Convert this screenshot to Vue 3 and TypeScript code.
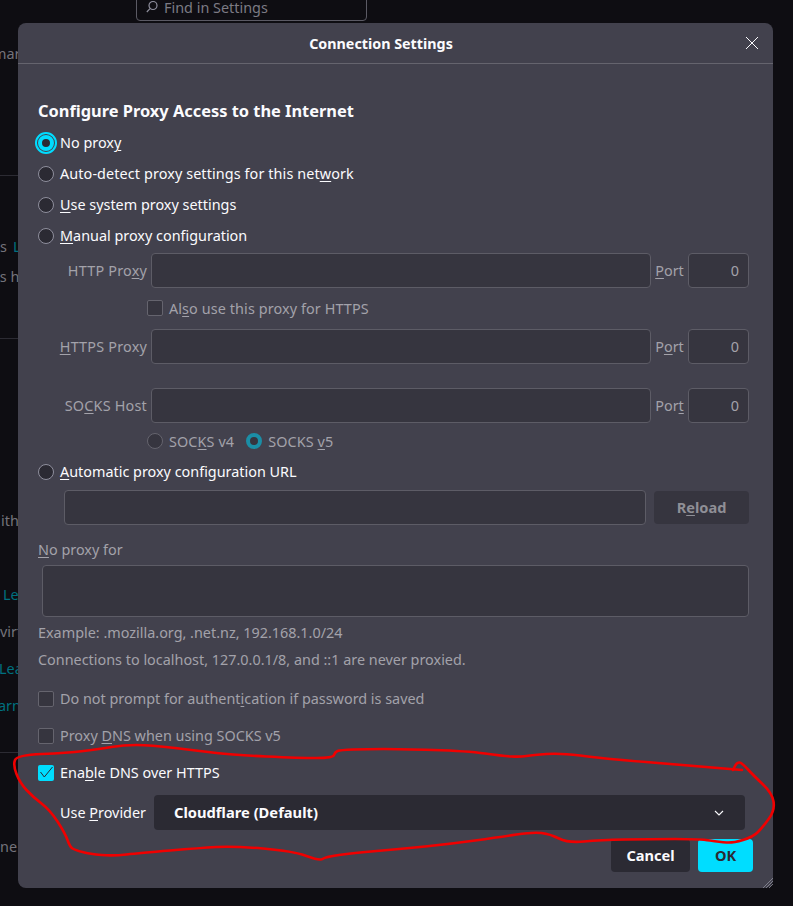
<script setup lang="ts">
const inkPoints: [number, number][] = [
  [742, 770], [683, 765], [633, 761], [600, 758], [560, 753], [533, 755], [520, 757], [503, 756], [467, 751],
  [400, 749], [367, 749], [340, 750], [335, 752], [333, 758], [300, 758], [233, 755], [200, 751], [150, 745],
  [123, 745], [100, 749], [67, 753], [17, 755], [13, 765], [20, 783], [33, 797], [50, 810], [65, 833], [70, 847],
  [75, 850], [90, 854], [113, 856], [140, 853], [200, 848], [233, 846], [293, 851], [320, 861], [325, 857],
  [353, 853], [400, 849], [450, 844], [500, 837], [533, 832], [550, 834], [568, 843], [600, 840], [650, 839],
  [700, 839], [720, 842], [733, 843], [753, 837], [763, 827], [775, 810], [772, 793], [753, 775], [742, 763],
  [737, 762], [733, 770],
]

function smooth(points: [number, number][]): string {
  let d = `M${points[0][0]} ${points[0][1]}`
  for (let i = 1; i < points.length - 1; i++) {
    const [x, y] = points[i]
    const [nx, ny] = points[i + 1]
    d += ` Q${x} ${y} ${(x + nx) / 2} ${(y + ny) / 2}`
  }
  const last = points[points.length - 1]
  return d + ` L${last[0]} ${last[1]}`
}
const annotation = smooth(inkPoints)

const fragments = [
  { text: 'mar', top: 45, left: -7, link: false },
  { text: 's', top: 238, left: 0, link: false },
  { text: 'L', top: 238, left: 13, link: true },
  { text: "'s h", top: 268, left: -3, link: false },
  { text: 'ith', top: 512, left: 1, link: false },
  { text: 'Le', top: 586, left: 3, link: true },
  { text: 'virt', top: 623, left: 0, link: false },
  { text: 'Lea', top: 660, left: -1, link: true },
  { text: 'arn', top: 697, left: -2, link: true },
  { text: 'ne', top: 838, left: 0, link: false },
]
const rules = [175, 338, 752]
</script>

<template>
  <div class="page">
    <div class="backdrop">
      <div class="search">
        <svg class="search-icon" width="12" height="14" viewBox="0 0 12 14" fill="none" stroke="#8f8f9d" stroke-width="1.2">
          <circle cx="7" cy="5.5" r="4" />
          <path d="M4 8.6 L0.8 12" />
        </svg>
        <span>Find in Settings</span>
      </div>
      <span
        v-for="f in fragments"
        :key="f.text + f.top"
        class="frag"
        :class="{ link: f.link }"
        :style="{ top: f.top + 'px', left: f.left + 'px' }"
      >{{ f.text }}</span>
      <i v-for="r in rules" :key="r" class="rule" :style="{ top: r + 'px' }"></i>
    </div>

    <section class="dialog">
      <header class="head">
        <h1>Connection Settings</h1>
        <svg class="close" width="14" height="14" viewBox="0 0 14 14" stroke="#fbfbfe" stroke-width="1" fill="none">
          <path d="M1 1 L13 13 M13 1 L1 13" />
        </svg>
      </header>

      <div class="body">
        <h2>Configure Proxy Access to the Internet</h2>

        <label class="opt first"><span class="radio on focus"></span><span>No prox<u>y</u></span></label>
        <label class="opt"><span class="radio"></span><span class="wide">Auto-detect proxy settings for this net<u>w</u>ork</span></label>
        <label class="opt"><span class="radio"></span><span><u>U</u>se system proxy settings</span></label>
        <label class="opt"><span class="radio"></span><span><u>M</u>anual proxy configuration</span></label>

        <div class="proxy-row r-http dim">
          <span class="plabel">HTTP Pro<u>x</u>y</span>
          <span class="field grow"></span>
          <span class="port"><u>P</u>ort</span>
          <span class="field num">0</span>
        </div>
        <label class="sub r-also dim"><span class="check"></span><span class="wide">Al<u>s</u>o use this proxy for HTTPS</span></label>
        <div class="proxy-row r-https dim">
          <span class="plabel"><u>H</u>TTPS Proxy</span>
          <span class="field grow"></span>
          <span class="port">P<u>o</u>rt</span>
          <span class="field num">0</span>
        </div>
        <div class="proxy-row r-socks dim">
          <span class="plabel">SO<u>C</u>KS Host</span>
          <span class="field grow"></span>
          <span class="port">Por<u>t</u></span>
          <span class="field num">0</span>
        </div>
        <div class="sub r-ver dim">
          <label class="ver"><span class="radio"></span><span class="wide">SOC<u>K</u>S v4</span></label>
          <label class="ver"><span class="radio on"></span><span class="wide">SOCKS <u>v</u>5</span></label>
        </div>

        <label class="opt r-auto"><span class="radio"></span><span><u>A</u>utomatic proxy configuration URL</span></label>
        <div class="auto-row">
          <span class="field grow"></span>
          <span class="reload"><span>R<u>e</u>load</span></span>
        </div>

        <div class="noproxy dim"><u>N</u>o proxy for</div>
        <div class="field area"></div>
        <p class="hint h1">Example: .mozilla.org, .net.nz, 192.168.1.0/24</p>
        <p class="hint h2">Connections to localhost, 127.0.0.1/8, and ::1 are never proxied.</p>

        <label class="opt r-prompt dim"><span class="check"></span><span>Do not prompt for authent<u>i</u>cation if password is saved</span></label>
        <label class="opt r-dns dim"><span class="check"></span><span>Proxy <u>D</u>NS when using SOCKS v5</span></label>
        <label class="opt r-doh">
          <span class="check on">
            <svg width="16" height="16" viewBox="0 0 16 16" fill="none" stroke="#2b2a33" stroke-width="1"><path d="M2.5 7 L6.3 12 L14.5 2" /></svg>
          </span><span>Ena<u>b</u>le DNS over HTTPS</span>
        </label>
        <div class="provider">
          <span class="plabel2">Use <u>P</u>rovider</span>
          <div class="select">
            <span>Cloudflare (Default)</span>
            <svg width="10" height="6" viewBox="0 0 10 6" fill="none" stroke="#fbfbfe" stroke-width="1.1"><path d="M1 1 L5 5 L9 1" /></svg>
          </div>
        </div>
      </div>

      <footer class="foot">
        <button class="btn cancel" type="button">Cancel</button>
        <button class="btn ok" type="button">OK</button>
      </footer>
      <svg class="grip" width="11" height="11" viewBox="0 0 11 11" stroke="#8f8f9d" stroke-width="0.8">
        <path d="M11 1 L1 11 M11 4 L4 11 M11 7 L7 11" />
      </svg>
    </section>

    <svg class="ink" width="793" height="906" viewBox="0 0 793 906" fill="none" stroke="#f00000" stroke-width="2.6" stroke-linejoin="round" stroke-linecap="round">
      <path :d="annotation" />
    </svg>
  </div>
</template>

<style>
html, body { margin: 0; background: #0e0d12; }
</style>

<style scoped>
.page {
  position: relative;
  width: 793px;
  height: 906px;
  overflow: hidden;
  background: #0e0d12;
  font-family: "Noto Sans", "Open Sans", sans-serif;
  font-size: 14.4px;
  color: #fbfbfe;
  box-sizing: border-box;
  padding: 23px 20px 18px 18px;
}
u { text-decoration-thickness: 1px; text-underline-offset: 2px; }
.wide { letter-spacing: 0.1px; }

.backdrop { position: absolute; inset: 0; }
.search {
  position: absolute; left: 136px; top: -12px; height: 33px;
  border: 1px solid #5b5a64; border-radius: 4px; color: #7c7b84;
  display: flex; align-items: center; gap: 6px; padding: 5px 9px 0; box-sizing: border-box;
  width: 231px;
}
.search-icon { flex: none; }
.frag { position: absolute; color: #74737b; font-size: 14.4px; line-height: 18px; }
.frag.link { color: #00707f; }
.rule { position: absolute; left: 0; width: 18px; height: 1px; background: #2c2b33; }

.dialog {
  position: relative;
  height: 865px;
  background: #42414d;
  border-radius: 8px;
  box-sizing: border-box;
  display: flex;
  flex-direction: column;
}
.head {
  position: relative;
  flex: none;
  height: 41px;
  border-bottom: 1px solid #65646e;
  display: flex;
  align-items: center;
  justify-content: center;
  padding-right: 29px;
  box-sizing: border-box;
}
h1 { margin: 0; padding-top: 1px; font-size: 14.3px; font-weight: 700; line-height: 38px; }
.close { position: absolute; right: 14px; top: 13px; }

.body { flex: 1; padding: 0 20px; display: flex; flex-direction: column; min-height: 0; }
h2 { margin: 36px 0 0; font-size: 16.4px; font-weight: 700; line-height: 22px; height: 22px; }

.opt { display: flex; align-items: center; gap: 6px; height: 20px; margin-top: 11px; line-height: 20px; white-space: pre; }
.radio {
  flex: none; width: 16px; height: 16px; box-sizing: border-box; border-radius: 50%;
  background: #2b2a33; border: 1px solid #8f8f9d; display: inline-block;
}
.radio.on { background: #2b2a33; border: 4px solid #00ddff; }
.radio.focus { outline: 2px solid #00ddff; outline-offset: 1px; }

.dim { color: #a3a2aa; }
.dim .radio, .dim .check { background: #36353f; border-color: #65646e; }
.dim .radio.on { background: #36353f; border-color: #1b8ea6; }

.field {
  display: block; box-sizing: border-box; background: #36353f; border: 1px solid #5d5c66; border-radius: 4px;
}
.grow { flex: 1; min-width: 0; }
.proxy-row { display: flex; align-items: center; height: 35px; }
.proxy-row .field { height: 35px; }
.plabel { flex: none; width: 109px; text-align: right; margin-right: 4px; letter-spacing: 0.2px; }
.port { flex: none; width: 29px; margin-left: 4px; margin-right: 4px; text-align: center; white-space: nowrap; }
.num {
  flex: none; width: 61px; text-align: right; padding-right: 9px; line-height: 33px; color: #a3a2aa;
}
.r-http { margin-top: 7px; margin-right: 4px; }
.r-https { margin-top: 11px; margin-right: 4px; }
.r-socks { margin-top: 24px; margin-right: 4px; }

.sub { display: flex; align-items: center; height: 20px; margin-left: 109px; white-space: pre; }
.sub .check { margin-right: 6px; }
.r-also { margin-top: 10px; }
.r-ver { margin-top: 8px; gap: 12px; }
.ver { display: flex; align-items: center; gap: 6px; }

.check {
  flex: none; display: inline-flex; width: 16px; height: 16px; box-sizing: border-box;
  border-radius: 2px; border: 1px solid #8f8f9d; background: #2b2a33;
}
.check.on { background: #00ddff; border: none; }

.r-auto { margin-top: 11px; }
.auto-row { display: flex; align-items: center; height: 35px; margin-top: 8px; margin-left: 26px; margin-right: 4px; gap: 8px; }
.auto-row .field { height: 35px; }
.reload {
  flex: none; width: 95px; height: 33px; border-radius: 4px; background: #36353f; color: #8f8f96;
  display: flex; align-items: center; justify-content: center; font-weight: 700; font-size: 14.6px; padding-bottom: 2px; box-sizing: border-box;
}
.noproxy { height: 20px; line-height: 20px; margin-top: 15px; }
.area { height: 52px; margin: 5px 4px 0 4px; }
.hint { margin: 0; height: 20px; line-height: 20px; color: #a3a2aa; }
.hint.h1 { margin-top: 6px; }
.hint.h2 { margin-top: 7px; }
.r-prompt { margin-top: 19px; }
.r-dns { margin-top: 17px; }
.r-doh { margin-top: 17px; }

.provider { display: flex; align-items: center; height: 35px; margin-top: 12px; margin-left: 22px; margin-right: 8px; }
.plabel2 { flex: none; width: 94px; }
.select {
  flex: 1; height: 35px; background: #2b2a33; border-radius: 4px; display: flex; align-items: center;
  justify-content: space-between; padding: 0 21px 2px 20px; font-weight: 700; font-size: 14.7px; box-sizing: border-box;
}
.select svg { margin-top: 2px; }

.foot { flex: none; display: flex; justify-content: flex-end; gap: 8px; padding: 0 20px 16px 0; }
.btn {
  height: 33px; border: none; border-radius: 4px; font: inherit; font-weight: 700; font-size: 14.6px; padding: 0 0 2px;
}
.cancel { width: 79px; background: #2b2a33; color: #fbfbfe; }
.ok { width: 55px; background: #00ddff; color: #2b2a33; }
.grip { position: absolute; right: 0; bottom: 0; }

.ink { position: absolute; left: 0; top: 0; pointer-events: none; }
</style>
